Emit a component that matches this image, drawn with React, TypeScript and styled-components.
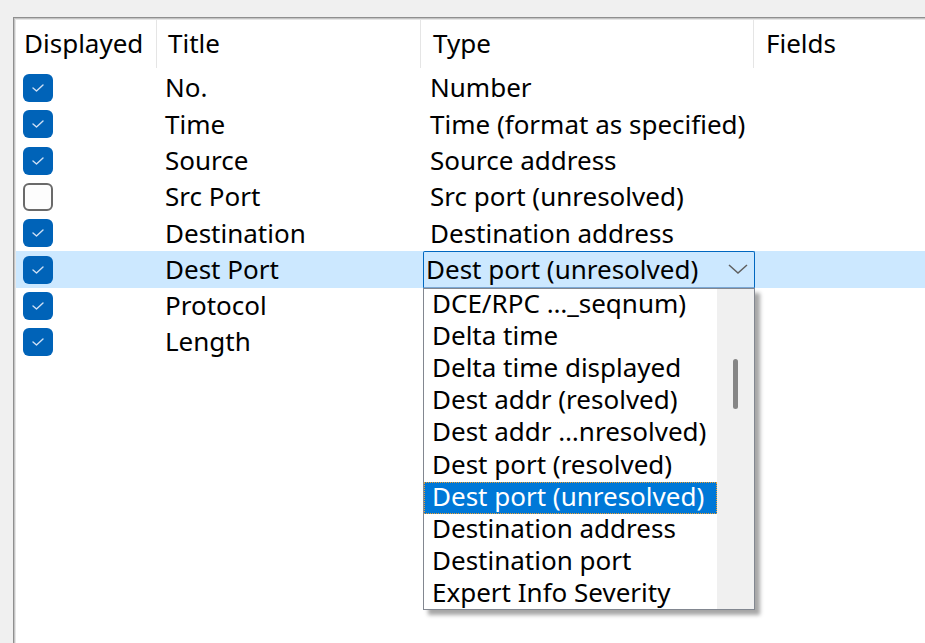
import React from "react";
import styled, { createGlobalStyle } from "styled-components";

const Global = createGlobalStyle`
  html, body { margin: 0; padding: 0; background: #f0f0f0; }
  body { font-family: "Noto Sans", "Open Sans", sans-serif; color: #000; }
  * { box-sizing: border-box; }
`;

const FONT = 26;

const Page = styled.div`
  width: 925px;
  height: 643px;
  overflow: hidden;
  padding: 17px 0 0 13px;
  display: flex;
`;

const Panel = styled.div`
  flex: 1;
  background: #fff;
  border-top: 1px solid #8f8f8f;
  border-left: 1px solid #8f8f8f;
  box-shadow: inset 1px 1px 0 #c4c4c4, inset 2px 2px 0 #e6e6e6;
  padding: 2px 0 0 2px;
  display: flex;
  flex-direction: column;
  font-size: ${FONT}px;
  line-height: 1.1;
`;

const Grid = styled.div`
  display: grid;
  grid-template-columns: 141px 264px 333px 1fr;
`;

const HeaderCell = styled.div<{ $pad: number; $sep?: boolean }>`
  height: 48px;
  display: flex;
  align-items: center;
  padding-left: ${(p) => p.$pad}px;
  padding-bottom: 1px;
  border-right: ${(p) => (p.$sep ? "1px solid #e5e5e5" : "none")};
  white-space: nowrap;
`;

const Rows = styled.div`
  padding-top: 2px;
  display: flex;
  flex-direction: column;
`;

const Row = styled.div<{ $selected?: boolean }>`
  display: grid;
  grid-template-columns: 141px 264px 333px 1fr;
  height: 36.3px;
  align-items: center;
  background: ${(p) => (p.$selected ? "#cce8ff" : "transparent")};
  position: relative;
`;

const CheckCell = styled.div`
  padding-left: 7px;
  display: flex;
  align-items: center;
`;

const Box = styled.div<{ $checked: boolean }>`
  width: 30px;
  height: 28px;
  border-radius: 6px;
  display: flex;
  align-items: center;
  justify-content: center;
  background: ${(p) => (p.$checked ? "#0063b8" : "#fdfdfd")};
  border: ${(p) => (p.$checked ? "none" : "2px solid #6a6a6a")};
`;

const TextCell = styled.div<{ $pad: number }>`
  padding-left: ${(p) => p.$pad}px;
  white-space: nowrap;
  padding-bottom: 1px;
`;

const TypeCell = styled.div`
  position: relative;
  height: 100%;
  display: flex;
  align-items: center;
`;

const Combo = styled.div`
  position: absolute;
  left: 2px;
  right: -1px;
  top: 0;
  bottom: 0;
  border: 1px solid #0067c0;
  border-bottom-color: #7aa7d4;
  border-radius: 2px 2px 0 0;
  background: #cce8ff;
  display: flex;
  align-items: center;
  justify-content: space-between;
  padding: 0 6px 1px 2px;
  white-space: nowrap;
`;

const Popup = styled.div`
  position: absolute;
  left: 2px;
  right: -1px;
  top: 100%;
  height: 322px;
  background: #fff;
  border: 1px solid #828790;
  box-shadow: 5px 5px 4px rgba(0, 0, 0, 0.35);
  display: flex;
  z-index: 5;
`;

const List = styled.div`
  flex: 1;
  display: flex;
  flex-direction: column;
`;

const Item = styled.div<{ $selected?: boolean }>`
  height: 32.2px;
  display: flex;
  align-items: center;
  padding: 0 0 4px 8px;
  white-space: nowrap;
  background: ${(p) => (p.$selected ? "#0078d7" : "transparent")};
  color: ${(p) => (p.$selected ? "#fff" : "#000")};
  outline: ${(p) => (p.$selected ? "1px dotted #f0a030" : "none")};
  outline-offset: -1px;
`;

const Scrollbar = styled.div`
  width: 37px;
  background: #f0f0f0;
  position: relative;
`;

const Thumb = styled.div`
  position: absolute;
  left: 16px;
  top: 70px;
  width: 5px;
  height: 50px;
  border-radius: 3px;
  background: #868686;
`;

const Check = () => (
  <svg width="14" height="10" viewBox="0 0 14 10">
    <polyline points="2,5 5.5,8 12,2" fill="none" stroke="#cfe0f4" strokeWidth="1.4" strokeLinecap="round" strokeLinejoin="round" />
  </svg>
);

const Chevron = () => (
  <svg width="20" height="10" viewBox="0 0 20 10">
    <polyline points="1,1 10,9 19,1" fill="none" stroke="#5f5f5f" strokeWidth="1.5" />
  </svg>
);

const rows = [
  { on: true, title: "No.", type: "Number" },
  { on: true, title: "Time", type: "Time (format as specified)" },
  { on: true, title: "Source", type: "Source address" },
  { on: false, title: "Src Port", type: "Src port (unresolved)" },
  { on: true, title: "Destination", type: "Destination address" },
  { on: true, title: "Dest Port", type: "Dest port (unresolved)", editing: true },
  { on: true, title: "Protocol", type: "" },
  { on: true, title: "Length", type: "" },
];

const options = [
  "DCE/RPC …_seqnum)",
  "Delta time",
  "Delta time displayed",
  "Dest addr (resolved)",
  "Dest addr …nresolved)",
  "Dest port (resolved)",
  "Dest port (unresolved)",
  "Destination address",
  "Destination port",
  "Expert Info Severity",
];

export default function App() {
  return (
    <>
      <Global />
      <Page>
        <Panel>
          <Grid>
            <HeaderCell $pad={8} $sep>Displayed</HeaderCell>
            <HeaderCell $pad={11} $sep>Title</HeaderCell>
            <HeaderCell $pad={12} $sep>Type</HeaderCell>
            <HeaderCell $pad={12}>Fields</HeaderCell>
          </Grid>
          <Rows>
            {rows.map((r) => (
              <Row key={r.title} $selected={r.editing}>
                <CheckCell>
                  <Box $checked={r.on}>{r.on && <Check />}</Box>
                </CheckCell>
                <TextCell $pad={8}>{r.title}</TextCell>
                {r.editing ? (
                  <TypeCell>
                    <Combo>
                      <span>{r.type}</span>
                      <Chevron />
                    </Combo>
                    <Popup>
                      <List>
                        {options.map((o) => (
                          <Item key={o} $selected={o === "Dest port (unresolved)"}>{o}</Item>
                        ))}
                      </List>
                      <Scrollbar>
                        <Thumb />
                      </Scrollbar>
                    </Popup>
                  </TypeCell>
                ) : (
                  <TextCell $pad={9}>{r.type}</TextCell>
                )}
                <div />
              </Row>
            ))}
          </Rows>
        </Panel>
      </Page>
    </>
  );
}
